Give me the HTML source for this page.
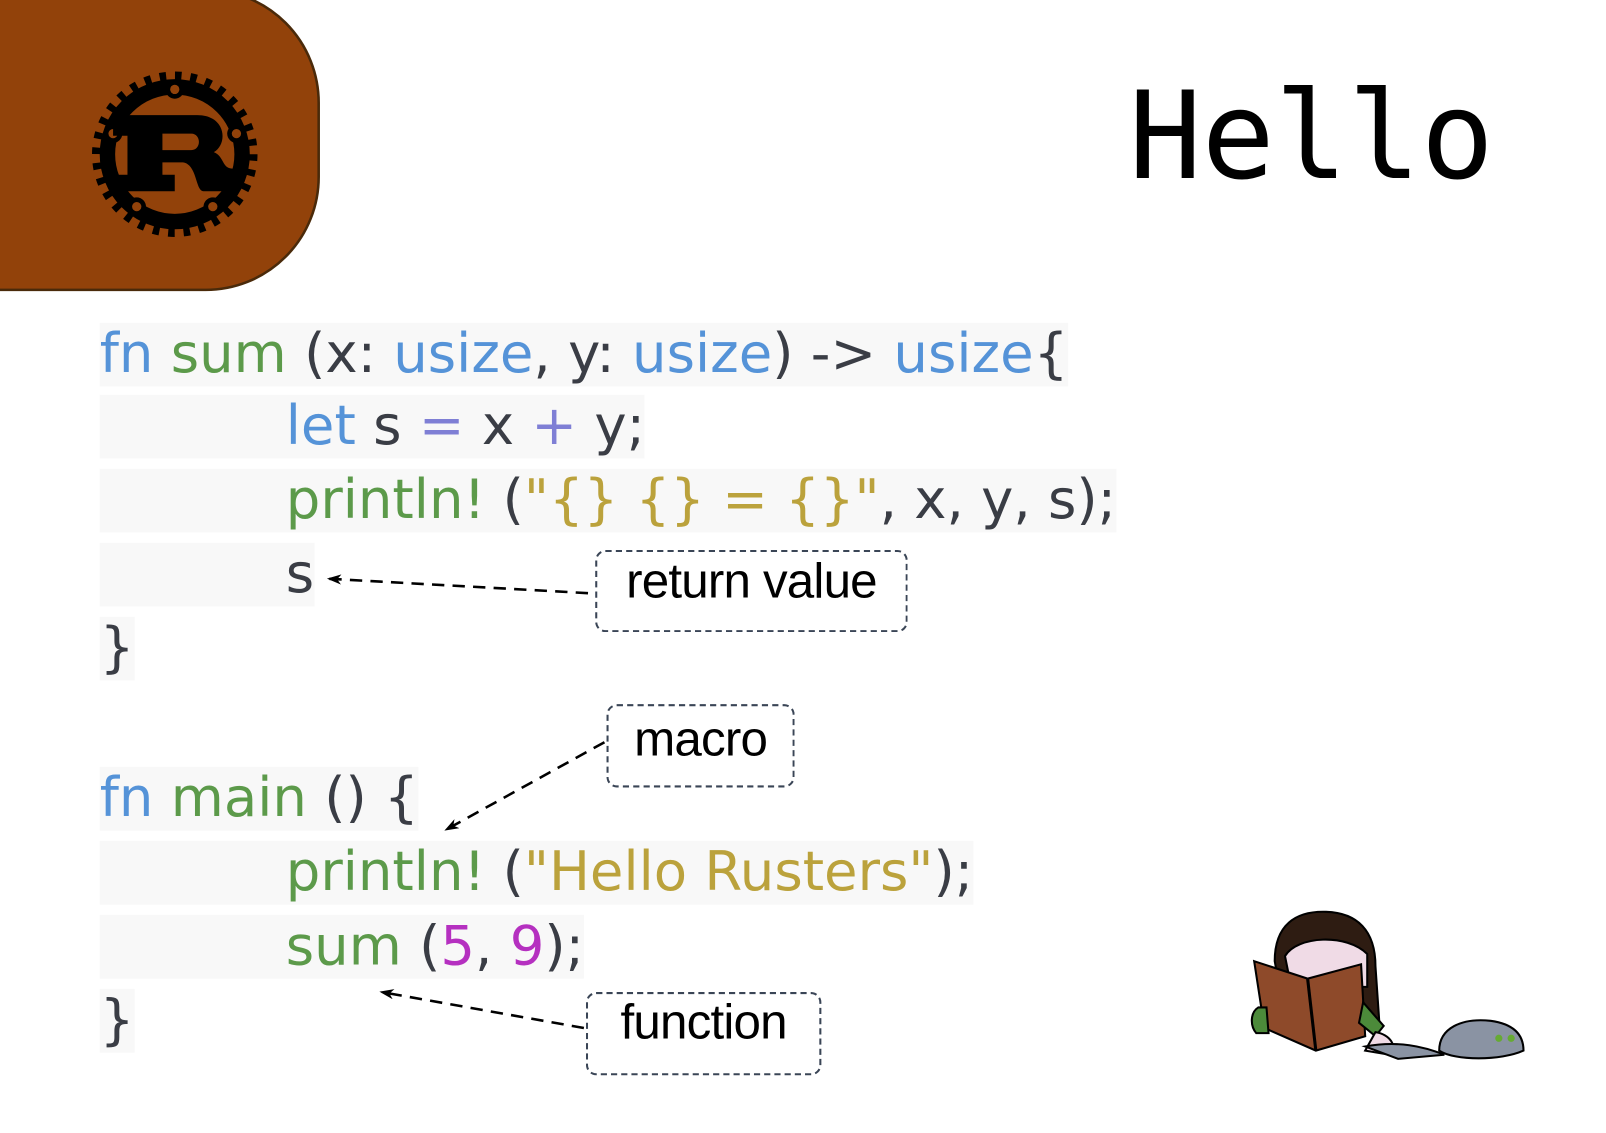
<!DOCTYPE html>
<html><head><meta charset="utf-8"><style>
html,body{margin:0;padding:0;background:#fff;width:1606px;height:1133px;overflow:hidden;position:relative}
#w{position:absolute;left:0;top:0;width:1606px;height:1133px;transform:scale(1.028);transform-origin:0 0}
.l{position:absolute;left:97px;height:62px;line-height:62px;font-family:"DejaVu Sans",sans-serif;font-size:53px;white-space:pre;background:#f8f8f8;color:#3a3d45}
.b{color:#5593d8}.g{color:#5c9a4a}.o{color:#7f7fd5}.y{color:#bba23c}.m{color:#b530c0}
.box{position:absolute;border:2px dashed #3a4556;border-radius:10px;font-family:"Liberation Sans",sans-serif;font-size:48px;letter-spacing:-0.8px;color:#000;text-align:center;box-sizing:border-box}
</style></head><body><div id="w">
<svg width="320" height="290" style="position:absolute;left:0;top:0">
<path d="M-10,-10 H200 A110,110 0 0 1 310,100 V172 A110,110 0 0 1 200,282 H-10 Z" fill="#92420a" stroke="#4a2a0a" stroke-width="2.5"/>
<g transform="translate(170,150)">
<circle r="72" fill="none" stroke="#000" stroke-width="17" stroke-dasharray="6 8.14"/>
<circle r="66" fill="none" stroke="#000" stroke-width="14"/>
<circle r="62" fill="none" stroke="#000" stroke-width="8"/>
<g fill="#000">
<circle cx="0" cy="-63" r="9"/><circle cx="60" cy="-20" r="9"/><circle cx="-60" cy="-20" r="9"/><circle cx="37" cy="51" r="9"/><circle cx="-37" cy="51" r="9"/>
</g>
<g fill="#92420a">
<circle cx="0" cy="-63" r="4.5"/><circle cx="60" cy="-20" r="4.5"/><circle cx="-60" cy="-20" r="4.5"/><circle cx="37" cy="51" r="4.5"/><circle cx="-37" cy="51" r="4.5"/>
</g>
<path d="M-60,-38 H22 C50,-38 52,-10 38,-2 C48,2 46,14 56,14 H60 V36 H28 C20,36 22,10 8,8 H-12 V20 H0 V36 H-60 V20 H-46 V-18 H-60 Z M-12,-20 V-4 H16 C26,-4 26,-20 16,-20 Z" fill="#000" fill-rule="evenodd"/>
</g>
</svg>
<div style="position:absolute;left:1098px;top:62px;font-family:'DejaVu Sans Mono',monospace;font-size:118px;line-height:140px;color:#000">Hello</div>

<div class="l" style="top:314px"><span class="b">fn</span> <span class="g">sum</span> (x: <span class="b">usize</span>, y: <span class="b">usize</span>) -&gt; <span class="b">usize</span>{</div>
<div class="l" style="top:384px;padding-left:181px"><span class="b">let</span> s <span class="o">=</span> x <span class="o">+</span> y;</div>
<div class="l" style="top:456px;padding-left:181px"><span class="g">println!</span> (<span class="y">"{} {} = {}"</span>, x, y, s);</div>
<div class="l" style="top:528px;padding-left:181px">s</div>
<div class="l" style="top:600px">}</div>
<div class="l" style="top:746px"><span class="b">fn</span> <span class="g">main</span> () {</div>
<div class="l" style="top:818px;padding-left:181px"><span class="g">println!</span> (<span class="y">"Hello Rusters"</span>);</div>
<div class="l" style="top:890px;padding-left:181px"><span class="g">sum</span> (<span class="m">5</span>, <span class="m">9</span>);</div>
<div class="l" style="top:962px">}</div>

<div class="box" style="left:579px;top:535px;width:304px;height:80px;line-height:58px">return value</div>
<div class="box" style="left:590px;top:685px;width:183px;height:81px;line-height:66px">macro</div>
<div class="box" style="left:570px;top:965px;width:229px;height:81px;line-height:56px">function</div>

<svg width="1606" height="1133" style="position:absolute;left:0;top:0;pointer-events:none">
<defs><marker id="a" markerWidth="14" markerHeight="10" refX="12" refY="5" orient="auto" markerUnits="userSpaceOnUse"><path d="M0,0 L14,5 L0,10 L4,5 Z" fill="#000"/></marker></defs>
<g stroke="#000" stroke-width="2.5" stroke-dasharray="12 8" fill="none">
<line x1="572" y1="577" x2="320" y2="563" marker-end="url(#a)"/>
<line x1="588" y1="722" x2="434" y2="807" marker-end="url(#a)"/>
<line x1="568" y1="1000" x2="371" y2="965" marker-end="url(#a)"/>
</g>
<g transform="translate(1210,880)" stroke="#000" stroke-width="2">
<path d="M30,55 C30,20 50,6 80,7 C110,8 128,25 128,60 L132,118 L40,110 Z" fill="#2e1c12"/>
<path d="M40,50 C52,30 100,28 120,48 L120,80 L46,80 Z" fill="#f0dbe6"/>
<path d="M10,55 L62,72 L114,58 L118,128 L70,142 L20,120 Z" fill="#8e4a2a"/>
<path d="M62,72 L70,142" stroke-width="3"/>
<path d="M14,100 C6,105 6,118 12,125 L24,125 L22,100 Z" fill="#4c8a3a"/>
<path d="M116,95 L136,118 L128,128 L112,115 Z" fill="#4c8a3a"/>
<path d="M128,124 C142,126 150,138 142,146 L118,142 Z" fill="#f0dbe6"/>
<path d="M190,142 C190,120 212,110 240,113 C262,116 272,126 272,142 C250,152 205,152 190,142 Z" fill="#8a93a3"/>
<path d="M118,138 C150,132 175,138 195,146 L150,150 Z" fill="#8a93a3"/>
<circle cx="248" cy="130" r="3.5" fill="#6a3" stroke="none"/><circle cx="260" cy="130" r="3.5" fill="#6a3" stroke="none"/>
</g>
</svg>
</div></body></html>
